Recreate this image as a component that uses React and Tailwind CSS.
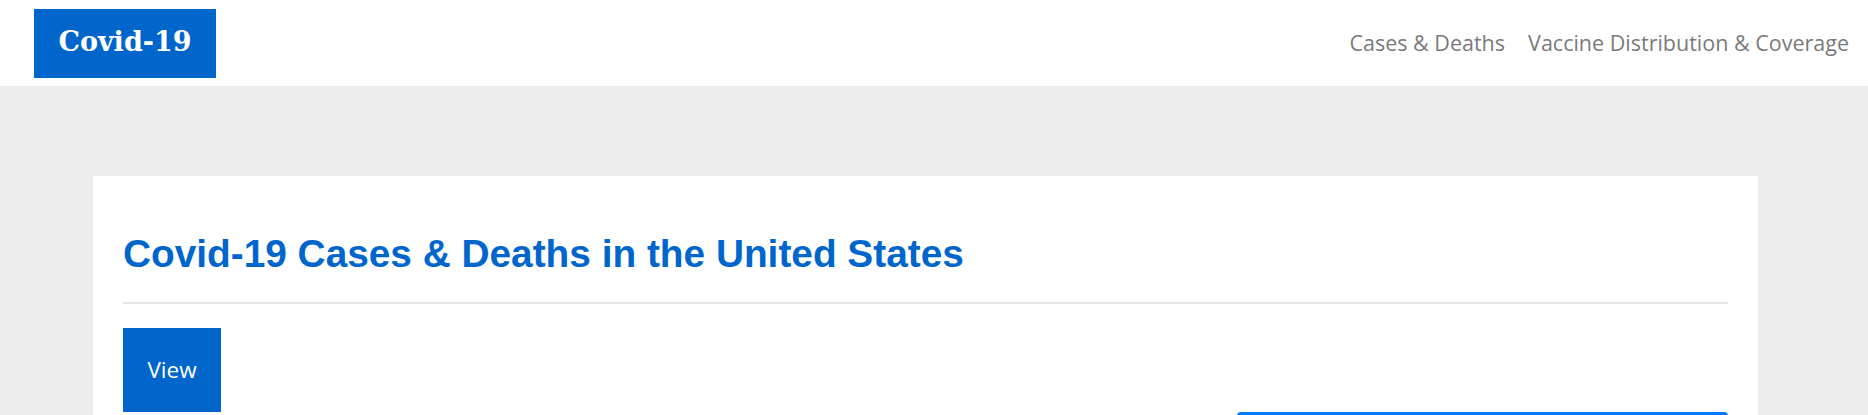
import React from 'react'

const navLinks = ['Cases & Deaths', 'Vaccine Distribution & Coverage']

function Header() {
  return (
    <header className="flex h-[86px] items-center justify-between bg-white pl-[34px] pr-[19px]">
      <a
        href="#"
        className="flex h-[69px] w-[182px] items-center justify-center bg-[#0066cc] pb-[2px] text-[27px] font-bold text-white [font-family:'DejaVu_Serif',serif]"
      >
        Covid-19
      </a>
      <nav className="flex items-center gap-[23px] text-[21.5px] text-[#7a7a7a] [font-family:'Open_Sans',sans-serif]">
        {navLinks.map((link) => (
          <a key={link} href="#" className="leading-none">
            {link}
          </a>
        ))}
      </nav>
    </header>
  )
}

export default function App() {
  return (
    <div className="min-h-screen bg-[#ececec]">
      <Header />

      <main className="pl-[93px] pt-[90px]">
        <section className="w-[1665px] bg-white px-[30px] pt-[56px] pb-10">
          <h1 className="text-[38.8px] leading-[44px] font-bold text-[#0066cc] [font-family:'Liberation_Sans',sans-serif]">
            Covid-19 Cases &amp; Deaths in the United States
          </h1>

          <hr className="mt-[26px] h-[2px] border-0 bg-[#e6e6e6]" />

          <div className="mt-[24px] flex items-start justify-between">
            <button className="flex h-[84px] w-[98px] items-center justify-center bg-[#0066cc] text-[22.5px] text-white [font-family:'Open_Sans',sans-serif]">
              View
            </button>

            <div className="w-[491px] pt-[84px]">
              <button className="h-[44px] w-full rounded-[4px] bg-[#007bff] text-white" />
            </div>
          </div>
        </section>
      </main>
    </div>
  )
}
